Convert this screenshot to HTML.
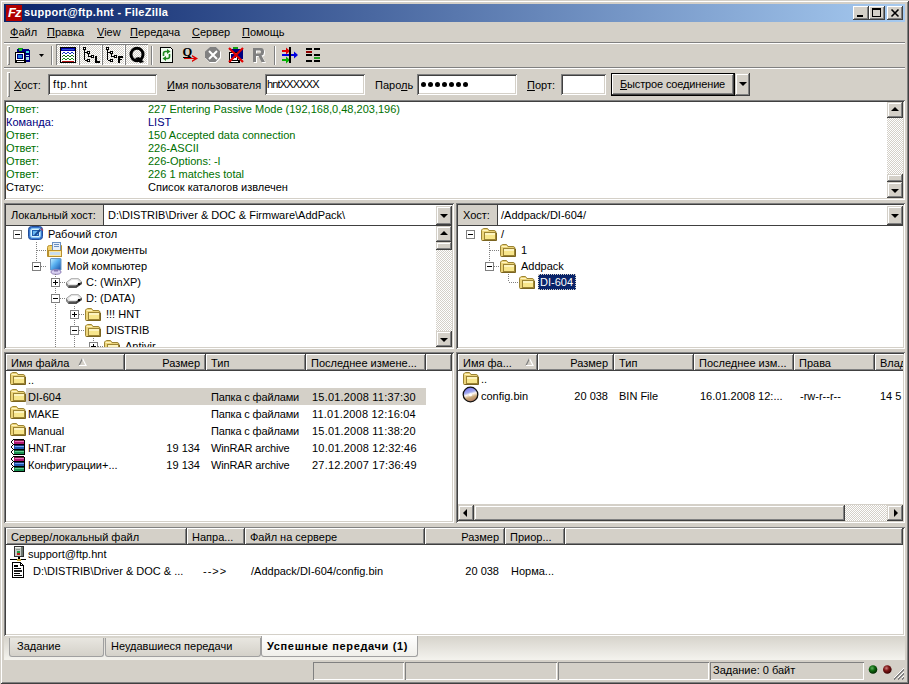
<!DOCTYPE html>
<html><head><meta charset="utf-8">
<style>
*{box-sizing:border-box}
html,body{margin:0;padding:0}
body{width:909px;height:684px;position:relative;overflow:hidden;background:#d4d0c8;font-family:"Liberation Sans",sans-serif;font-size:11px;color:#000}
.a{position:absolute}
.t{position:absolute;white-space:nowrap;line-height:13px;font-size:11px}
.w{background:#fff}
.sunk{box-shadow:inset 1px 1px 0 #808080,inset -1px -1px 0 #fff,inset 2px 2px 0 #404040,inset -2px -2px 0 #d4d0c8}
.rais{box-shadow:inset -1px -1px 0 #404040,inset 1px 1px 0 #d4d0c8,inset -2px -2px 0 #808080,inset 2px 2px 0 #fff;background:#d4d0c8}
.hdr{box-shadow:inset -1px -1px 0 #404040,inset 1px 1px 0 #fff,inset -2px -2px 0 #808080;background:#d4d0c8}
.pres{box-shadow:inset 1px 1px 0 #808080,inset -1px -1px 0 #fff;background-color:#ebe9e4;background-image:repeating-conic-gradient(#fff 0 25%,#d4d0c8 0 50%);background-size:2px 2px}
.track{background-image:repeating-conic-gradient(#fff 0 25%,#d4d0c8 0 50%);background-size:2px 2px}
.u{text-decoration:underline}
.hl{position:absolute}
</style></head><body>
<!-- window frame -->
<div class="a" style="left:0;top:0;width:909px;height:684px;box-shadow:inset 1px 1px 0 #d4d0c8,inset -1px -1px 0 #404040,inset 2px 2px 0 #fff,inset -2px -2px 0 #808080"></div>
<!-- title bar -->
<div class="a" style="left:4px;top:4px;width:901px;height:18px;background:linear-gradient(90deg,#0a246a,#a6caf0)"></div>
<div class="a" style="left:6px;top:5px;width:16px;height:16px;background:#b00000"></div>
<div class="t" style="left:8px;top:6px;color:#fff;font-weight:bold;font-style:italic;font-size:13px;letter-spacing:-1px">Fz</div>
<div class="t" style="left:24px;top:6px;color:#fff;font-weight:bold;letter-spacing:0.28px">support@ftp.hnt - FileZilla</div>
<div class="a" style="left:853px;top:6px;width:16px;height:14px;background:#d4d0c8;box-shadow:inset -1px -1px 0 #404040,inset 1px 1px 0 #fff,inset -2px -2px 0 #808080"></div><div class="a" style="left:869px;top:6px;width:16px;height:14px;background:#d4d0c8;box-shadow:inset -1px -1px 0 #404040,inset 1px 1px 0 #fff,inset -2px -2px 0 #808080"></div><div class="a" style="left:887px;top:6px;width:16px;height:14px;background:#d4d0c8;box-shadow:inset -1px -1px 0 #404040,inset 1px 1px 0 #fff,inset -2px -2px 0 #808080"></div><div class="a" style="left:857px;top:15px;width:6px;height:2px;background:#000"></div><div class="a" style="left:872px;top:8px;width:9px;height:9px;border:1px solid #000;border-top-width:2px"></div><svg class="a" style="left:887px;top:6px" width="16" height="14"><path d="M4.5 3.5 L11.5 10.5 M11.5 3.5 L4.5 10.5" stroke="#000" stroke-width="1.6"/></svg>
<!-- menu -->
<div class="t" style="left:10px;top:26px"><span class="u">Ф</span>айл</div>
<div class="t" style="left:47px;top:26px"><span class="u">П</span>равка</div>
<div class="t" style="left:97px;top:26px"><span class="u">V</span>iew</div>
<div class="t" style="left:130px;top:26px"><span class="u">П</span>ередача</div>
<div class="t" style="left:192px;top:26px"><span class="u">С</span>ервер</div>
<div class="t" style="left:242px;top:26px"><span class="u">П</span>омощь</div>
<div class="a" style="left:4px;top:42px;width:901px;height:1px;background:#808080"></div>
<div class="a" style="left:4px;top:43px;width:901px;height:1px;background:#fff"></div>
<!-- toolbar -->
<div class="a" style="left:7px;top:46px;width:3px;height:19px;box-shadow:inset 1px 1px 0 #fff,inset -1px -1px 0 #808080"></div>
<div class="a pres" style="left:56px;top:44px;width:23px;height:21px"></div><div class="a pres" style="left:79px;top:44px;width:23px;height:21px"></div><div class="a pres" style="left:102px;top:44px;width:23px;height:21px"></div><div class="a pres" style="left:125px;top:44px;width:23px;height:21px"></div>
<svg class="a" style="left:0;top:0" width="909" height="70" shape-rendering="crispEdges">
<!-- site manager icon -->
<g transform="translate(15,48)">
<rect x="3" y="0" width="5" height="2" fill="#10a010"/>
<rect x="2" y="1" width="12" height="3" fill="#000080"/>
<rect x="4" y="1" width="3" height="2" fill="#20c020"/>
<rect x="10" y="2" width="5" height="12" fill="#000080"/>
<rect x="11" y="3" width="3" height="2" fill="#40e0e0"/>
<rect x="11" y="7" width="3" height="1" fill="#c0f0f0"/>
<rect x="11" y="9" width="3" height="3" fill="#a0e0e0"/>
<rect x="0" y="4" width="10" height="9" fill="#000"/>
<rect x="1" y="5" width="8" height="7" fill="#fff"/>
<rect x="2" y="6" width="6" height="5" fill="#000080"/>
<rect x="3" y="7" width="4" height="3" fill="#2080e0"/>
<rect x="0" y="12" width="11" height="3" fill="#000"/>
<rect x="2" y="13" width="7" height="1" fill="#fff"/>
</g>
<polygon points="39,54 44,54 41.5,57" fill="#000" shape-rendering="auto"/>
<!-- separator -->
<rect x="51" y="46" width="1" height="19" fill="#808080"/><rect x="52" y="46" width="1" height="19" fill="#fff"/>
<!-- log icon -->
<g transform="translate(60,47)">
<rect x="0" y="0" width="16" height="16" fill="#000"/>
<rect x="1" y="1" width="14" height="3" fill="#0000a8"/>
<rect x="2" y="2" width="12" height="1" fill="#3050d0"/>
<rect x="1" y="4" width="14" height="11" fill="#fff"/>
<rect x="2" y="6" width="1" height="1" fill="#1030c0"/><rect x="3" y="5" width="1" height="1" fill="#1030c0"/><rect x="4" y="5" width="1" height="1" fill="#1030c0"/><rect x="5" y="6" width="1" height="1" fill="#1030c0"/><rect x="6" y="6" width="1" height="1" fill="#1030c0"/><rect x="7" y="5" width="1" height="1" fill="#1030c0"/><rect x="8" y="5" width="1" height="1" fill="#1030c0"/><rect x="9" y="6" width="1" height="1" fill="#1030c0"/><rect x="10" y="6" width="1" height="1" fill="#1030c0"/><rect x="11" y="5" width="1" height="1" fill="#1030c0"/><rect x="12" y="5" width="1" height="1" fill="#1030c0"/><rect x="13" y="6" width="1" height="1" fill="#1030c0"/><rect x="2" y="9" width="1" height="1" fill="#107010"/><rect x="3" y="8" width="1" height="1" fill="#107010"/><rect x="4" y="8" width="1" height="1" fill="#107010"/><rect x="5" y="9" width="1" height="1" fill="#107010"/><rect x="6" y="9" width="1" height="1" fill="#107010"/><rect x="7" y="8" width="1" height="1" fill="#107010"/><rect x="8" y="8" width="1" height="1" fill="#107010"/><rect x="9" y="9" width="1" height="1" fill="#107010"/><rect x="10" y="9" width="1" height="1" fill="#107010"/><rect x="11" y="8" width="1" height="1" fill="#107010"/><rect x="12" y="8" width="1" height="1" fill="#107010"/><rect x="13" y="9" width="1" height="1" fill="#107010"/><rect x="2" y="12" width="1" height="1" fill="#109010"/><rect x="3" y="11" width="1" height="1" fill="#109010"/><rect x="4" y="11" width="1" height="1" fill="#109010"/><rect x="5" y="12" width="1" height="1" fill="#109010"/><rect x="6" y="12" width="1" height="1" fill="#109010"/><rect x="7" y="11" width="1" height="1" fill="#109010"/><rect x="8" y="11" width="1" height="1" fill="#109010"/><rect x="9" y="12" width="1" height="1" fill="#109010"/><rect x="10" y="12" width="1" height="1" fill="#109010"/><rect x="11" y="11" width="1" height="1" fill="#109010"/><rect x="12" y="11" width="1" height="1" fill="#109010"/><rect x="13" y="12" width="1" height="1" fill="#109010"/><rect x="2" y="14" width="12" height="1" fill="#b01010"/>
</g>
<!-- tree L icon -->
<rect x="84" y="50" width="1" height="10" fill="#000"/><rect x="85" y="52" width="2" height="1" fill="#000"/><rect x="88" y="54" width="1" height="2" fill="#000"/><rect x="88" y="56" width="3" height="1" fill="#000"/><rect x="85" y="60" width="2" height="1" fill="#000"/><rect x="83" y="47" width="3" height="3" fill="#000"/><rect x="84" y="48" width="1" height="1" fill="#fff"/><rect x="87" y="51" width="3" height="3" fill="#000"/><rect x="88" y="52" width="1" height="1" fill="#fff"/><rect x="91" y="55" width="3" height="3" fill="#000"/><rect x="92" y="56" width="1" height="1" fill="#fff"/><rect x="87" y="59" width="3" height="3" fill="#000"/><rect x="88" y="60" width="1" height="1" fill="#fff"/><rect x="95" y="56" width="2" height="7" fill="#000"/><rect x="95" y="61" width="5" height="2" fill="#000"/>
<!-- tree F icon -->
<rect x="107" y="50" width="1" height="10" fill="#000"/><rect x="108" y="52" width="2" height="1" fill="#000"/><rect x="111" y="54" width="1" height="2" fill="#000"/><rect x="111" y="56" width="3" height="1" fill="#000"/><rect x="108" y="60" width="2" height="1" fill="#000"/><rect x="106" y="47" width="3" height="3" fill="#000"/><rect x="107" y="48" width="1" height="1" fill="#fff"/><rect x="110" y="51" width="3" height="3" fill="#000"/><rect x="111" y="52" width="1" height="1" fill="#fff"/><rect x="114" y="55" width="3" height="3" fill="#000"/><rect x="115" y="56" width="1" height="1" fill="#fff"/><rect x="110" y="59" width="3" height="3" fill="#000"/><rect x="111" y="60" width="1" height="1" fill="#fff"/><rect x="118" y="56" width="2" height="7" fill="#000"/><rect x="118" y="56" width="5" height="2" fill="#000"/><rect x="118" y="59" width="4" height="1" fill="#000"/>
<!-- Q icon -->
<g shape-rendering="auto">
<ellipse cx="137" cy="54.5" rx="6" ry="6.3" fill="none" stroke="#000" stroke-width="3"/>
<path d="M135 58 L139 57 L144 62 L140 63z" fill="#000"/>
</g>
<!-- separator -->
<rect x="151" y="46" width="1" height="19" fill="#808080"/><rect x="152" y="46" width="1" height="19" fill="#fff"/>
<!-- refresh icon -->
<g transform="translate(160,47)">
<path d="M0 0 H10 L13 3 V16 H0z" fill="#000"/>
<path d="M1 1 H9.5 L12 3.5 V15 H1z" fill="#f0faf0"/>
<path d="M10 1 L12 3 H10z" fill="#fff"/>
<g shape-rendering="auto" fill="none" stroke="#1e8a1e" stroke-width="1.6">
<path d="M3.5 9 V6.5 Q3.5 4.5 5.5 4.5 H7.5"/>
<path d="M9.5 7 V9.5 Q9.5 11.5 7.5 11.5 H5.5"/>
</g>
<path d="M7 2 L10.5 4.5 L7 7z" fill="#1e8a1e" shape-rendering="auto"/>
<path d="M6 9 L2.5 11.5 L6 14z" fill="#1e8a1e" shape-rendering="auto"/>
</g>
<!-- Q arrow -->
<text x="182.5" y="56" font-family="Liberation Serif" font-weight="bold" font-size="12.5" fill="#000" shape-rendering="auto">Q</text>
<rect x="183" y="57" width="8" height="1" fill="#000"/>
<rect x="184" y="58" width="11" height="1" fill="#e00000"/>
<path d="M192 55 L198 58.5 L192 62 L192 60.5 L195 58.5 L192 56.5z" fill="#e00000" shape-rendering="auto"/>
<!-- cancel octagon -->
<g shape-rendering="auto">
<path d="M210 47 H216 L221 52 V58 L216 63 H210 L205 58 V52z" fill="#fff"/>
<path d="M210 47 H216 L220 51 V57 L215.5 62 H209.5 L205 57.5 V51.5z" fill="#808080"/>
<path d="M209 51 L217 59 M217 51 L209 59" stroke="#fff" stroke-width="2"/>
</g>
<!-- disconnect -->
<g transform="translate(228,47)">
<rect x="5" y="0" width="5" height="2" fill="#10a010"/>
<rect x="3" y="2" width="12" height="10" fill="#000080"/>
<rect x="1" y="5" width="9" height="9" fill="#000"/>
<rect x="2" y="6" width="7" height="7" fill="#fff"/>
<rect x="3" y="7" width="5" height="4" fill="#000080"/>
<rect x="1" y="13" width="11" height="3" fill="#000"/>
<rect x="3" y="14" width="7" height="1" fill="#fff"/>
<path d="M1 1 L15 15 M15 1 L1 15" stroke="#e00000" stroke-width="2.2" shape-rendering="auto"/>
</g>
<!-- R disabled -->
<path transform="translate(1,1)" d="M253 48 H261 Q264 48 264 51.5 V52.5 Q264 55 261.5 55.5 L265 62 H261.5 L258.5 56 H256 V62 H253z M256 50.5 V53.5 H260 Q261 53.5 261 52 Q261 50.5 260 50.5z" fill="#fff" fill-rule="evenodd" shape-rendering="auto"/>
<path d="M253 48 H261 Q264 48 264 51.5 V52.5 Q264 55 261.5 55.5 L265 62 H261.5 L258.5 56 H256 V62 H253z M256 50.5 V53.5 H260 Q261 53.5 261 52 Q261 50.5 260 50.5z" fill="#808080" fill-rule="evenodd" shape-rendering="auto"/>
<!-- separator -->
<rect x="274" y="46" width="1" height="19" fill="#808080"/><rect x="275" y="46" width="1" height="19" fill="#fff"/>
<!-- sync -->
<g shape-rendering="auto">
<rect x="282" y="50" width="6" height="2" fill="#e00000"/><path d="M286 47.5 L290 51 L286 54.5z" fill="#e00000"/>
<rect x="282" y="59" width="6" height="2" fill="#00b000"/><path d="M286 56.5 L290 60 L286 63.5z" fill="#00b000"/>
<rect x="282" y="54" width="13" height="2" fill="#0000e0"/><path d="M294 51.5 L298 55 L294 58.5z" fill="#0000e0"/>
</g>
<rect x="289" y="47" width="2" height="16" fill="#000"/>
<!-- compare -->
<rect x="306" y="48" width="6" height="2" fill="#000"/><rect x="314" y="48" width="6" height="2" fill="#000"/>
<rect x="306" y="51" width="6" height="2" fill="#900000"/>
<rect x="306" y="54" width="6" height="2" fill="#000"/><rect x="314" y="54" width="6" height="2" fill="#000"/>
<rect x="314" y="57" width="6" height="2" fill="#20a020"/>
<rect x="306" y="60" width="6" height="2" fill="#000"/><rect x="314" y="60" width="6" height="2" fill="#000"/>
</svg>

<div class="a" style="left:4px;top:67px;width:901px;height:1px;background:#808080"></div>
<div class="a" style="left:4px;top:68px;width:901px;height:1px;background:#fff"></div>
<!-- quickconnect -->
<div class="a" style="left:7px;top:72px;width:3px;height:25px;box-shadow:inset 1px 1px 0 #fff,inset -1px -1px 0 #808080"></div>
<div class="t" style="left:14px;top:79px"><span class="u">Х</span>ост:</div>
<div class="a w sunk" style="left:48px;top:74px;width:109px;height:21px"></div>
<div class="t" style="left:53px;top:78px;letter-spacing:0.6px">ftp.hnt</div>
<div class="t" style="left:167px;top:79px"><span class="u">И</span>мя пользователя</div>
<div class="a w sunk" style="left:265px;top:74px;width:100px;height:21px"></div>
<div class="t" style="left:267px;top:78px;letter-spacing:-0.85px">hntXXXXXX</div>
<div class="t" style="left:375px;top:79px">Паро<span class="u">л</span>ь</div>
<div class="a w sunk" style="left:417px;top:74px;width:100px;height:21px"></div>
<div class="a" style="left:421px;top:82px;width:5px;height:5px;border-radius:50%;background:#000"></div><div class="a" style="left:428px;top:82px;width:5px;height:5px;border-radius:50%;background:#000"></div><div class="a" style="left:435px;top:82px;width:5px;height:5px;border-radius:50%;background:#000"></div><div class="a" style="left:442px;top:82px;width:5px;height:5px;border-radius:50%;background:#000"></div><div class="a" style="left:449px;top:82px;width:5px;height:5px;border-radius:50%;background:#000"></div><div class="a" style="left:456px;top:82px;width:5px;height:5px;border-radius:50%;background:#000"></div><div class="a" style="left:463px;top:82px;width:5px;height:5px;border-radius:50%;background:#000"></div>
<div class="t" style="left:527px;top:79px"><span class="u">П</span>орт:</div>
<div class="a w sunk" style="left:561px;top:74px;width:45px;height:21px"></div>
<div class="a" style="left:611px;top:73px;width:124px;height:23px;border:1px solid #000;background:#d4d0c8;box-shadow:inset -1px -1px 0 #404040,inset 1px 1px 0 #fff,inset -2px -2px 0 #808080"></div>
<div class="t" style="left:620px;top:78px;letter-spacing:-0.15px"><span class="u">Б</span>ыстрое соединение</div>
<div class="a rais" style="left:735px;top:73px;width:15px;height:23px"></div>
<div class="a" style="left:739px;top:82px;width:0;height:0;border-left:4px solid transparent;border-right:4px solid transparent;border-top:4px solid #000"></div>
<!-- log -->
<div class="a w sunk" style="left:4px;top:100px;width:901px;height:100px"></div>
<div class="t" style="left:6px;top:103px;color:#007000">Ответ:</div><div class="t" style="left:148px;top:103px;color:#007000">227 Entering Passive Mode (192,168,0,48,203,196)</div><div class="t" style="left:6px;top:116px;color:#000080">Команда:</div><div class="t" style="left:148px;top:116px;color:#000080">LIST</div><div class="t" style="left:6px;top:129px;color:#007000">Ответ:</div><div class="t" style="left:148px;top:129px;color:#007000">150 Accepted data connection</div><div class="t" style="left:6px;top:142px;color:#007000">Ответ:</div><div class="t" style="left:148px;top:142px;color:#007000">226-ASCII</div><div class="t" style="left:6px;top:155px;color:#007000">Ответ:</div><div class="t" style="left:148px;top:155px;color:#007000">226-Options: -l</div><div class="t" style="left:6px;top:168px;color:#007000">Ответ:</div><div class="t" style="left:148px;top:168px;color:#007000">226 1 matches total</div><div class="t" style="left:6px;top:181px;color:#000">Статус:</div><div class="t" style="left:148px;top:181px;color:#000">Список каталогов извлечен</div><div class="a track" style="left:887px;top:102px;width:16px;height:96px"></div><div class="a rais" style="left:887px;top:102px;width:16px;height:16px"></div><div class="a" style="left:891px;top:107px;width:0;height:0;border-left:4px solid transparent;border-right:4px solid transparent;border-bottom:4px solid #000"></div><div class="a rais" style="left:887px;top:174px;width:16px;height:8px"></div><div class="a rais" style="left:887px;top:182px;width:16px;height:16px"></div><div class="a" style="left:891px;top:189px;width:0;height:0;border-left:4px solid transparent;border-right:4px solid transparent;border-top:4px solid #000"></div>
<!-- local site panel -->
<div class="a w sunk" style="left:4px;top:203px;width:450px;height:146px"></div>
<div class="a" style="left:6px;top:205px;width:446px;height:20px;background:#d4d0c8"></div><div class="a" style="left:6px;top:225px;width:446px;height:1px;background:#404040"></div><div class="t" style="left:11px;top:209px;">Локальный хост:</div><div class="a" style="left:103px;top:205px;width:1px;height:20px;background:#404040"></div><div class="a w" style="left:104px;top:205px;width:348px;height:20px"></div><div class="t" style="left:108px;top:209px;">D:\DISTRIB\Driver &amp; DOC &amp; Firmware\AddPack\</div><div class="a rais" style="left:436px;top:206px;width:16px;height:19px"></div><div class="a" style="left:440px;top:214px;width:0;height:0;border-left:4px solid transparent;border-right:4px solid transparent;border-top:4px solid #000"></div><div class="a track" style="left:436px;top:226px;width:16px;height:121px"></div><div class="a rais" style="left:436px;top:226px;width:16px;height:16px"></div><div class="a" style="left:440px;top:231px;width:0;height:0;border-left:4px solid transparent;border-right:4px solid transparent;border-bottom:4px solid #000"></div><div class="a rais" style="left:436px;top:242px;width:16px;height:8px"></div><div class="a rais" style="left:436px;top:331px;width:16px;height:16px"></div><div class="a" style="left:440px;top:338px;width:0;height:0;border-left:4px solid transparent;border-right:4px solid transparent;border-top:4px solid #000"></div><div class="a" style="left:13px;top:230px;width:9px;height:9px;border:1px solid #808080;background:#fff"></div><div class="a" style="left:15px;top:234px;width:5px;height:1px;background:#000"></div><svg class="a" style="left:28px;top:225px" width="16" height="16" ><rect x="0.5" y="1.5" width="14" height="13" rx="3" fill="#3a78d0" stroke="#204c98"/><rect x="2.5" y="3.5" width="10" height="9" rx="2" fill="#d8f2ff" stroke="#8cc8f0"/><rect x="4.5" y="5.5" width="6" height="5" fill="#6ab8f0" stroke="#2060b0"/><path d="M6 10 L11.5 4 L13 5.5 L7.5 11z" fill="#184890"/><path d="M13 3.5 L15 5.5" stroke="#a04060" stroke-width="1.2"/></svg><div class="t" style="left:48px;top:228px;">Рабочий стол</div><div class="a" style="left:36px;top:242px;width:1px;height:24px;background-image:linear-gradient(#808080 50%,transparent 50%);background-size:1px 2px"></div><div class="a" style="left:37px;top:250px;width:9px;height:1px;background-image:linear-gradient(90deg,#808080 50%,transparent 50%);background-size:2px 1px"></div><svg class="a" style="left:47px;top:242px" width="16" height="16" ><path d="M0.5 5.5 Q0.5 3.5 2.5 3.5 H14.5 V14.5 H0.5z" fill="#f2d06a" stroke="#b8902e"/><rect x="5.5" y="0.5" width="8" height="8" fill="#e8f0fb" stroke="#6b8fc0"/><rect x="7" y="2" width="5" height="1" fill="#6b8fc0"/><rect x="7" y="4" width="5" height="1" fill="#6b8fc0"/><rect x="1.5" y="8.5" width="13" height="6" fill="#fbe6a0" stroke="#b8902e"/><rect x="3" y="10" width="10" height="3" fill="#c8ddf0"/></svg><div class="t" style="left:67px;top:244px;">Мои документы</div><div class="a" style="left:32px;top:262px;width:9px;height:9px;border:1px solid #808080;background:#fff"></div><div class="a" style="left:34px;top:266px;width:5px;height:1px;background:#000"></div><div class="a" style="left:41px;top:266px;width:6px;height:1px;background-image:linear-gradient(90deg,#808080 50%,transparent 50%);background-size:2px 1px"></div><svg class="a" style="left:46px;top:258px" width="16" height="17" ><defs><linearGradient id="mcg" x1="0" y1="0" x2="1" y2="1"><stop offset="0" stop-color="#c8f0ff"/><stop offset="0.45" stop-color="#58b0f0"/><stop offset="1" stop-color="#1850a8"/></linearGradient></defs><path d="M4.5 1 Q4.5 0.5 5 0.5 H14.5 Q15 0.5 15 1 V12 H4.5z" fill="url(#mcg)" stroke="#6898c8"/><ellipse cx="10" cy="14" rx="5" ry="2.3" fill="#d8d0f0" stroke="#9080b8"/><rect x="8" y="12" width="4" height="1.5" fill="#8878b0"/></svg><div class="t" style="left:67px;top:260px;">Мой компьютер</div><div class="a" style="left:55px;top:274px;width:1px;height:73px;background-image:linear-gradient(#808080 50%,transparent 50%);background-size:1px 2px"></div><div class="a" style="left:51px;top:278px;width:9px;height:9px;border:1px solid #808080;background:#fff"></div><div class="a" style="left:53px;top:282px;width:5px;height:1px;background:#000"></div><div class="a" style="left:55px;top:280px;width:1px;height:5px;background:#000"></div><div class="a" style="left:60px;top:282px;width:5px;height:1px;background-image:linear-gradient(90deg,#808080 50%,transparent 50%);background-size:2px 1px"></div><svg class="a" style="left:65px;top:278px" width="18" height="11" ><path d="M1 4.5 L6 0.5 H13.5 L17 4 V6 L11 10 H3.5 L1 7z" fill="#707070"/><path d="M1.5 4.5 L6.2 1 H13.3 L16.5 4 L11 7.5 H3.5z" fill="#e4e4e4"/><path d="M4 4 L7 2 H12 L14 4 L11 6 H5z" fill="#ffffff"/><path d="M3.5 7.5 H11 V10 H3.5z" fill="#505050"/><path d="M11 7.5 L16.5 4 V6 L11 10z" fill="#404040"/><rect x="13" y="5" width="2" height="2" fill="#000"/><path d="M1.5 5 L3.5 7.5 V9.5 L1.5 7z" fill="#909090"/></svg><div class="t" style="left:86px;top:276px;">C: (WinXP)</div><div class="a" style="left:51px;top:294px;width:9px;height:9px;border:1px solid #808080;background:#fff"></div><div class="a" style="left:53px;top:298px;width:5px;height:1px;background:#000"></div><div class="a" style="left:60px;top:298px;width:5px;height:1px;background-image:linear-gradient(90deg,#808080 50%,transparent 50%);background-size:2px 1px"></div><svg class="a" style="left:65px;top:294px" width="18" height="11" ><path d="M1 4.5 L6 0.5 H13.5 L17 4 V6 L11 10 H3.5 L1 7z" fill="#707070"/><path d="M1.5 4.5 L6.2 1 H13.3 L16.5 4 L11 7.5 H3.5z" fill="#e4e4e4"/><path d="M4 4 L7 2 H12 L14 4 L11 6 H5z" fill="#ffffff"/><path d="M3.5 7.5 H11 V10 H3.5z" fill="#505050"/><path d="M11 7.5 L16.5 4 V6 L11 10z" fill="#404040"/><rect x="13" y="5" width="2" height="2" fill="#000"/><path d="M1.5 5 L3.5 7.5 V9.5 L1.5 7z" fill="#909090"/></svg><div class="t" style="left:86px;top:292px;">D: (DATA)</div><div class="a" style="left:74px;top:306px;width:1px;height:41px;background-image:linear-gradient(#808080 50%,transparent 50%);background-size:1px 2px"></div><div class="a" style="left:70px;top:310px;width:9px;height:9px;border:1px solid #808080;background:#fff"></div><div class="a" style="left:72px;top:314px;width:5px;height:1px;background:#000"></div><div class="a" style="left:74px;top:312px;width:1px;height:5px;background:#000"></div><div class="a" style="left:79px;top:314px;width:5px;height:1px;background-image:linear-gradient(90deg,#808080 50%,transparent 50%);background-size:2px 1px"></div><svg class="a" style="left:85px;top:308px" width="17" height="14"><path d="M0.5 3 Q0.5 1.5 1.5 1 L2.5 0.5 H6.5 L8 2.5 H13 Q14.5 2.5 15 4 V12.5 H1.5 Q0.5 12.5 0.5 11.5z" fill="#ecd47a" stroke="#9c8434"/><path d="M1.5 2.5 H7" stroke="#fff4c0"/><rect x="3.5" y="4.5" width="11" height="7" fill="#f8e68c" stroke="#9c8434"/><rect x="4" y="5" width="10" height="2" fill="#fdf4c0"/><path d="M1.5 12.5 H15.5 V5" fill="none" stroke="#7a6420" stroke-width="1"/></svg><div class="t" style="left:106px;top:308px;">!!! HNT</div><div class="a" style="left:70px;top:326px;width:9px;height:9px;border:1px solid #808080;background:#fff"></div><div class="a" style="left:72px;top:330px;width:5px;height:1px;background:#000"></div><div class="a" style="left:79px;top:330px;width:5px;height:1px;background-image:linear-gradient(90deg,#808080 50%,transparent 50%);background-size:2px 1px"></div><svg class="a" style="left:85px;top:324px" width="17" height="14"><path d="M0.5 3 Q0.5 1.5 1.5 1 L2.5 0.5 H6.5 L8 2.5 H13 Q14.5 2.5 15 4 V12.5 H1.5 Q0.5 12.5 0.5 11.5z" fill="#ecd47a" stroke="#9c8434"/><path d="M1.5 2.5 H7" stroke="#fff4c0"/><rect x="3.5" y="4.5" width="11" height="7" fill="#f8e68c" stroke="#9c8434"/><rect x="4" y="5" width="10" height="2" fill="#fdf4c0"/><path d="M1.5 12.5 H15.5 V5" fill="none" stroke="#7a6420" stroke-width="1"/></svg><div class="t" style="left:106px;top:324px;">DISTRIB</div><div class="a" style="left:93px;top:338px;width:1px;height:9px;background-image:linear-gradient(#808080 50%,transparent 50%);background-size:1px 2px"></div><div class="a" style="left:6px;top:226px;width:429px;height:121px;overflow:hidden"><div class="a" style="margin-left:-6px;left:89px;margin-top:-226px;top:342px;width:9px;height:9px;border:1px solid #808080;background:#fff"></div><div class="a" style="margin-left:-6px;left:91px;margin-top:-226px;top:346px;width:5px;height:1px;background:#000"></div><div class="a" style="margin-left:-6px;left:93px;margin-top:-226px;top:344px;width:1px;height:5px;background:#000"></div><div class="a" style="margin-left:-6px;left:98px;margin-top:-226px;top:346px;width:5px;height:1px;background-image:linear-gradient(90deg,#808080 50%,transparent 50%);background-size:2px 1px"></div><svg class="a" style="margin-left:-6px;left:104px;margin-top:-226px;top:340px" width="17" height="14"><path d="M0.5 3 Q0.5 1.5 1.5 1 L2.5 0.5 H6.5 L8 2.5 H13 Q14.5 2.5 15 4 V12.5 H1.5 Q0.5 12.5 0.5 11.5z" fill="#ecd47a" stroke="#9c8434"/><path d="M1.5 2.5 H7" stroke="#fff4c0"/><rect x="3.5" y="4.5" width="11" height="7" fill="#f8e68c" stroke="#9c8434"/><rect x="4" y="5" width="10" height="2" fill="#fdf4c0"/><path d="M1.5 12.5 H15.5 V5" fill="none" stroke="#7a6420" stroke-width="1"/></svg><div class="t" style="margin-left:-6px;left:125px;margin-top:-226px;top:340px;">Antivir</div></div>
<!-- remote site panel -->
<div class="a w sunk" style="left:456px;top:203px;width:449px;height:146px"></div>
<div class="a" style="left:458px;top:205px;width:445px;height:20px;background:#d4d0c8"></div><div class="a" style="left:458px;top:225px;width:445px;height:1px;background:#404040"></div><div class="t" style="left:463px;top:209px;">Хост:</div><div class="a" style="left:497px;top:205px;width:1px;height:20px;background:#404040"></div><div class="a w" style="left:498px;top:205px;width:405px;height:20px"></div><div class="t" style="left:501px;top:209px;">/Addpack/DI-604/</div><div class="a rais" style="left:887px;top:206px;width:16px;height:19px"></div><div class="a" style="left:891px;top:214px;width:0;height:0;border-left:4px solid transparent;border-right:4px solid transparent;border-top:4px solid #000"></div><div class="a" style="left:466px;top:230px;width:9px;height:9px;border:1px solid #808080;background:#fff"></div><div class="a" style="left:468px;top:234px;width:5px;height:1px;background:#000"></div><svg class="a" style="left:481px;top:228px" width="17" height="14"><path d="M0.5 3 Q0.5 1.5 1.5 1 L2.5 0.5 H6.5 L8 2.5 H13 Q14.5 2.5 15 4 V12.5 H1.5 Q0.5 12.5 0.5 11.5z" fill="#ecd47a" stroke="#9c8434"/><path d="M1.5 2.5 H7" stroke="#fff4c0"/><rect x="3.5" y="4.5" width="11" height="7" fill="#f8e68c" stroke="#9c8434"/><rect x="4" y="5" width="10" height="2" fill="#fdf4c0"/><path d="M1.5 12.5 H15.5 V5" fill="none" stroke="#7a6420" stroke-width="1"/></svg><div class="t" style="left:501px;top:228px;">/</div><div class="a" style="left:489px;top:242px;width:1px;height:24px;background-image:linear-gradient(#808080 50%,transparent 50%);background-size:1px 2px"></div><div class="a" style="left:490px;top:250px;width:9px;height:1px;background-image:linear-gradient(90deg,#808080 50%,transparent 50%);background-size:2px 1px"></div><svg class="a" style="left:500px;top:244px" width="17" height="14"><path d="M0.5 3 Q0.5 1.5 1.5 1 L2.5 0.5 H6.5 L8 2.5 H13 Q14.5 2.5 15 4 V12.5 H1.5 Q0.5 12.5 0.5 11.5z" fill="#ecd47a" stroke="#9c8434"/><path d="M1.5 2.5 H7" stroke="#fff4c0"/><rect x="3.5" y="4.5" width="11" height="7" fill="#f8e68c" stroke="#9c8434"/><rect x="4" y="5" width="10" height="2" fill="#fdf4c0"/><path d="M1.5 12.5 H15.5 V5" fill="none" stroke="#7a6420" stroke-width="1"/></svg><div class="t" style="left:521px;top:244px;">1</div><div class="a" style="left:485px;top:262px;width:9px;height:9px;border:1px solid #808080;background:#fff"></div><div class="a" style="left:487px;top:266px;width:5px;height:1px;background:#000"></div><div class="a" style="left:494px;top:266px;width:5px;height:1px;background-image:linear-gradient(90deg,#808080 50%,transparent 50%);background-size:2px 1px"></div><svg class="a" style="left:500px;top:260px" width="17" height="14"><path d="M0.5 3 Q0.5 1.5 1.5 1 L2.5 0.5 H6.5 L8 2.5 H13 Q14.5 2.5 15 4 V12.5 H1.5 Q0.5 12.5 0.5 11.5z" fill="#ecd47a" stroke="#9c8434"/><path d="M1.5 2.5 H7" stroke="#fff4c0"/><rect x="3.5" y="4.5" width="11" height="7" fill="#f8e68c" stroke="#9c8434"/><rect x="4" y="5" width="10" height="2" fill="#fdf4c0"/><path d="M1.5 12.5 H15.5 V5" fill="none" stroke="#7a6420" stroke-width="1"/></svg><div class="t" style="left:521px;top:260px;">Addpack</div><div class="a" style="left:508px;top:274px;width:1px;height:8px;background-image:linear-gradient(#808080 50%,transparent 50%);background-size:1px 2px"></div><div class="a" style="left:509px;top:282px;width:9px;height:1px;background-image:linear-gradient(90deg,#808080 50%,transparent 50%);background-size:2px 1px"></div><svg class="a" style="left:519px;top:276px" width="17" height="14"><path d="M0.5 3 Q0.5 1.5 1.5 1 L2.5 0.5 H6.5 L8 2.5 H13 Q14.5 2.5 15 4 V12.5 H1.5 Q0.5 12.5 0.5 11.5z" fill="#ecd47a" stroke="#9c8434"/><path d="M1.5 2.5 H7" stroke="#fff4c0"/><rect x="3.5" y="4.5" width="11" height="7" fill="#f8e68c" stroke="#9c8434"/><rect x="4" y="5" width="10" height="2" fill="#fdf4c0"/><path d="M1.5 12.5 H15.5 V5" fill="none" stroke="#7a6420" stroke-width="1"/></svg><div class="a" style="left:538px;top:274px;width:38px;height:16px;background:#0a246a;outline:1px dotted #d4d0c8;outline-offset:-1px"></div><div class="t" style="left:540px;top:276px;color:#fff">DI-604</div>
<!-- local list -->
<div class="a w sunk" style="left:4px;top:352px;width:450px;height:171px"></div>
<div class="a hdr" style="left:6px;top:354px;width:119px;height:17px"></div><div class="t" style="left:11px;top:357px;">Имя файла</div><div class="a hdr" style="left:125px;top:354px;width:81px;height:17px"></div><div class="t" style="left:125px;top:357px;width:75px;text-align:right">Размер</div><div class="a hdr" style="left:206px;top:354px;width:100px;height:17px"></div><div class="t" style="left:211px;top:357px;">Тип</div><div class="a hdr" style="left:306px;top:354px;width:120px;height:17px"></div><div class="t" style="left:311px;top:357px;">Последнее измене...</div><div class="a hdr" style="left:426px;top:354px;width:26px;height:17px"></div><svg class="a" style="left:10px;top:372px" width="17" height="14"><path d="M0.5 3 Q0.5 1.5 1.5 1 L2.5 0.5 H6.5 L8 2.5 H13 Q14.5 2.5 15 4 V12.5 H1.5 Q0.5 12.5 0.5 11.5z" fill="#ecd47a" stroke="#9c8434"/><path d="M1.5 2.5 H7" stroke="#fff4c0"/><rect x="3.5" y="4.5" width="11" height="7" fill="#f8e68c" stroke="#9c8434"/><rect x="4" y="5" width="10" height="2" fill="#fdf4c0"/><path d="M1.5 12.5 H15.5 V5" fill="none" stroke="#7a6420" stroke-width="1"/></svg><div class="t" style="left:28px;top:374px;">..</div><div class="t" style="left:211px;top:374px;letter-spacing:-0.15px"></div><div class="t" style="left:312px;top:374px;letter-spacing:0.2px"></div><div class="a" style="left:26px;top:388px;width:400px;height:17px;background:#d4d0c8"></div><svg class="a" style="left:10px;top:389px" width="17" height="14"><path d="M0.5 3 Q0.5 1.5 1.5 1 L2.5 0.5 H6.5 L8 2.5 H13 Q14.5 2.5 15 4 V12.5 H1.5 Q0.5 12.5 0.5 11.5z" fill="#ecd47a" stroke="#9c8434"/><path d="M1.5 2.5 H7" stroke="#fff4c0"/><rect x="3.5" y="4.5" width="11" height="7" fill="#f8e68c" stroke="#9c8434"/><rect x="4" y="5" width="10" height="2" fill="#fdf4c0"/><path d="M1.5 12.5 H15.5 V5" fill="none" stroke="#7a6420" stroke-width="1"/></svg><div class="t" style="left:28px;top:391px;">DI-604</div><div class="t" style="left:211px;top:391px;letter-spacing:-0.15px">Папка с файлами</div><div class="t" style="left:312px;top:391px;letter-spacing:0.2px">15.01.2008 11:37:30</div><svg class="a" style="left:10px;top:406px" width="17" height="14"><path d="M0.5 3 Q0.5 1.5 1.5 1 L2.5 0.5 H6.5 L8 2.5 H13 Q14.5 2.5 15 4 V12.5 H1.5 Q0.5 12.5 0.5 11.5z" fill="#ecd47a" stroke="#9c8434"/><path d="M1.5 2.5 H7" stroke="#fff4c0"/><rect x="3.5" y="4.5" width="11" height="7" fill="#f8e68c" stroke="#9c8434"/><rect x="4" y="5" width="10" height="2" fill="#fdf4c0"/><path d="M1.5 12.5 H15.5 V5" fill="none" stroke="#7a6420" stroke-width="1"/></svg><div class="t" style="left:28px;top:408px;">MAKE</div><div class="t" style="left:211px;top:408px;letter-spacing:-0.15px">Папка с файлами</div><div class="t" style="left:312px;top:408px;letter-spacing:0.2px">11.01.2008 12:16:04</div><svg class="a" style="left:10px;top:423px" width="17" height="14"><path d="M0.5 3 Q0.5 1.5 1.5 1 L2.5 0.5 H6.5 L8 2.5 H13 Q14.5 2.5 15 4 V12.5 H1.5 Q0.5 12.5 0.5 11.5z" fill="#ecd47a" stroke="#9c8434"/><path d="M1.5 2.5 H7" stroke="#fff4c0"/><rect x="3.5" y="4.5" width="11" height="7" fill="#f8e68c" stroke="#9c8434"/><rect x="4" y="5" width="10" height="2" fill="#fdf4c0"/><path d="M1.5 12.5 H15.5 V5" fill="none" stroke="#7a6420" stroke-width="1"/></svg><div class="t" style="left:28px;top:425px;">Manual</div><div class="t" style="left:211px;top:425px;letter-spacing:-0.15px">Папка с файлами</div><div class="t" style="left:312px;top:425px;letter-spacing:0.2px">15.01.2008 11:38:20</div><div class="t" style="left:28px;top:442px;">HNT.rar</div><div class="t" style="left:125px;top:442px;width:75px;text-align:right">19 134</div><div class="t" style="left:211px;top:442px;letter-spacing:-0.15px">WinRAR archive</div><div class="t" style="left:312px;top:442px;letter-spacing:0.2px">10.01.2008 12:32:46</div><div class="t" style="left:28px;top:459px;">Конфигурации+...</div><div class="t" style="left:125px;top:459px;width:75px;text-align:right">19 134</div><div class="t" style="left:211px;top:459px;letter-spacing:-0.15px">WinRAR archive</div><div class="t" style="left:312px;top:459px;letter-spacing:0.2px">27.12.2007 17:36:49</div><svg class="a" style="left:9px;top:439px" width="17" height="17" shape-rendering="crispEdges"><path d="M1 3 L4 0 H15 L16 2 V5 L15 6 H5 L1 3z" fill="#000"/><rect x="5" y="2" width="10" height="3" fill="#b01870"/><rect x="6" y="2" width="9" height="1" fill="#f070c0"/><path d="M2 3 L4.5 1 V5z" fill="#fff"/><path d="M4 1 H14 L15 2 H5z" fill="#702040"/><path d="M1 8 L4 5 H15 L16 7 V10 L15 11 H5 L1 8z" fill="#000"/><rect x="5" y="7" width="10" height="3" fill="#2058b0"/><rect x="6" y="7" width="9" height="1" fill="#70a8f0"/><path d="M2 8 L4.5 6 V10z" fill="#fff"/><path d="M4 6 H14 L15 7 H5z" fill="#203070"/><path d="M1 13 L4 10 H15 L16 12 V15 L15 16 H5 L1 13z" fill="#000"/><rect x="5" y="12" width="10" height="3" fill="#189050"/><rect x="6" y="12" width="9" height="1" fill="#60d090"/><path d="M2 13 L4.5 11 V15z" fill="#fff"/><path d="M4 11 H14 L15 12 H5z" fill="#105030"/></svg><svg class="a" style="left:9px;top:456px" width="17" height="17" shape-rendering="crispEdges"><path d="M1 3 L4 0 H15 L16 2 V5 L15 6 H5 L1 3z" fill="#000"/><rect x="5" y="2" width="10" height="3" fill="#b01870"/><rect x="6" y="2" width="9" height="1" fill="#f070c0"/><path d="M2 3 L4.5 1 V5z" fill="#fff"/><path d="M4 1 H14 L15 2 H5z" fill="#702040"/><path d="M1 8 L4 5 H15 L16 7 V10 L15 11 H5 L1 8z" fill="#000"/><rect x="5" y="7" width="10" height="3" fill="#2058b0"/><rect x="6" y="7" width="9" height="1" fill="#70a8f0"/><path d="M2 8 L4.5 6 V10z" fill="#fff"/><path d="M4 6 H14 L15 7 H5z" fill="#203070"/><path d="M1 13 L4 10 H15 L16 12 V15 L15 16 H5 L1 13z" fill="#000"/><rect x="5" y="12" width="10" height="3" fill="#189050"/><rect x="6" y="12" width="9" height="1" fill="#60d090"/><path d="M2 13 L4.5 11 V15z" fill="#fff"/><path d="M4 11 H14 L15 12 H5z" fill="#105030"/></svg><svg class="a" style="left:78px;top:357px" width="10" height="10"><path d="M1 8.5 L4.5 1.5" stroke="#808080" stroke-width="1.2"/><path d="M4.5 1.5 L8 8.5 H1" fill="none" stroke="#fff" stroke-width="1.2"/></svg>
<!-- remote list -->
<div class="a w sunk" style="left:456px;top:352px;width:449px;height:171px"></div>
<div class="a" style="left:0;top:0;width:909px;height:684px;clip-path:inset(354px 6px 163px 458px)"><div class="a hdr" style="left:458px;top:354px;width:80px;height:17px"></div><div class="t" style="left:463px;top:357px;">Имя фа...</div><div class="a hdr" style="left:538px;top:354px;width:76px;height:17px"></div><div class="t" style="left:538px;top:357px;width:70px;text-align:right">Размер</div><div class="a hdr" style="left:614px;top:354px;width:80px;height:17px"></div><div class="t" style="left:619px;top:357px;">Тип</div><div class="a hdr" style="left:694px;top:354px;width:100px;height:17px"></div><div class="t" style="left:699px;top:357px;">Последнее изм...</div><div class="a hdr" style="left:794px;top:354px;width:81px;height:17px"></div><div class="t" style="left:799px;top:357px;">Права</div><div class="a hdr" style="left:875px;top:354px;width:60px;height:17px"></div><div class="t" style="left:880px;top:357px;">Влад</div><svg class="a" style="left:463px;top:372px" width="17" height="14"><path d="M0.5 3 Q0.5 1.5 1.5 1 L2.5 0.5 H6.5 L8 2.5 H13 Q14.5 2.5 15 4 V12.5 H1.5 Q0.5 12.5 0.5 11.5z" fill="#ecd47a" stroke="#9c8434"/><path d="M1.5 2.5 H7" stroke="#fff4c0"/><rect x="3.5" y="4.5" width="11" height="7" fill="#f8e68c" stroke="#9c8434"/><rect x="4" y="5" width="10" height="2" fill="#fdf4c0"/><path d="M1.5 12.5 H15.5 V5" fill="none" stroke="#7a6420" stroke-width="1"/></svg><div class="t" style="left:481px;top:373px;">..</div><div class="t" style="left:481px;top:390px;">config.bin</div><div class="t" style="left:537px;top:390px;width:71px;text-align:right">20 038</div><div class="t" style="left:619px;top:390px;">BIN File</div><div class="t" style="left:700px;top:390px;">16.01.2008 12:...</div><div class="t" style="left:800px;top:390px;">-rw-r--r--</div><div class="t" style="left:880px;top:390px;">14 5</div><div class="a" style="left:458px;top:504px;width:445px;height:17px;background:#d4d0c8"></div><div class="a track" style="left:458px;top:505px;width:445px;height:16px"></div><div class="a rais" style="left:458px;top:505px;width:16px;height:16px"></div><div class="a" style="left:463px;top:509px;width:0;height:0;border-top:4px solid transparent;border-bottom:4px solid transparent;border-right:4px solid #000"></div><div class="a rais" style="left:474px;top:505px;width:371px;height:16px"></div><div class="a rais" style="left:887px;top:505px;width:16px;height:16px"></div><div class="a" style="left:894px;top:509px;width:0;height:0;border-top:4px solid transparent;border-bottom:4px solid transparent;border-left:4px solid #000"></div></div><svg class="a" style="left:462px;top:386px" width="17" height="17" ><defs><linearGradient id="dg" x1="0.3" y1="0" x2="0.6" y2="1"><stop offset="0" stop-color="#7070f0"/><stop offset="0.35" stop-color="#a0a8f0"/><stop offset="0.5" stop-color="#fff8f0"/><stop offset="0.7" stop-color="#c8a878"/><stop offset="1" stop-color="#b07860"/></linearGradient></defs><circle cx="8.5" cy="8.5" r="7.3" fill="url(#dg)" stroke="#101010" stroke-width="1.3"/><circle cx="8.5" cy="8.8" r="1.5" fill="#fff"/></svg><svg class="a" style="left:525px;top:357px" width="10" height="10"><path d="M1 8.5 L4.5 1.5" stroke="#808080" stroke-width="1.2"/><path d="M4.5 1.5 L8 8.5 H1" fill="none" stroke="#fff" stroke-width="1.2"/></svg>
<!-- queue -->
<div class="a w sunk" style="left:4px;top:527px;width:901px;height:109px"></div>
<div class="a hdr" style="left:6px;top:528px;width:181px;height:17px"></div><div class="t" style="left:11px;top:531px;">Сервер/локальный файл</div><div class="a hdr" style="left:187px;top:528px;width:58px;height:17px"></div><div class="t" style="left:192px;top:531px;">Напра...</div><div class="a hdr" style="left:245px;top:528px;width:180px;height:17px"></div><div class="t" style="left:250px;top:531px;">Файл на сервере</div><div class="a hdr" style="left:425px;top:528px;width:80px;height:17px"></div><div class="t" style="left:425px;top:531px;width:74px;text-align:right">Размер</div><div class="a hdr" style="left:505px;top:528px;width:60px;height:17px"></div><div class="t" style="left:510px;top:531px;">Приор...</div><div class="a hdr" style="left:565px;top:528px;width:338px;height:17px"></div><div class="t" style="left:28px;top:548px;">support@ftp.hnt</div><div class="t" style="left:33px;top:565px;">D:\DISTRIB\Driver &amp; DOC &amp; ...</div><div class="t" style="left:203px;top:565px;letter-spacing:1px">--&gt;&gt;</div><div class="t" style="left:251px;top:565px;">/Addpack/DI-604/config.bin</div><div class="t" style="left:425px;top:565px;width:74px;text-align:right">20 038</div><div class="t" style="left:511px;top:565px;">Норма...</div><svg class="a" style="left:9px;top:546px" width="20" height="18" shape-rendering="crispEdges"><rect x="5.5" y="0.5" width="9" height="10" rx="1" fill="#c8ccc8" stroke="#303030"/><rect x="12" y="1" width="2" height="9" fill="#707870"/><rect x="6" y="1" width="6" height="1" fill="#f0f4f0"/><rect x="7" y="3" width="4" height="1" fill="#909890"/><rect x="8" y="5" width="3" height="2" fill="#20a040"/><rect x="8" y="7" width="3" height="2" fill="#c02020"/><rect x="1" y="13" width="16" height="1" fill="#000"/><rect x="9" y="11" width="2" height="2" fill="#000"/><rect x="8" y="13" width="4" height="2" fill="#c8a838"/></svg><svg class="a" style="left:12px;top:562px" width="13" height="17" shape-rendering="crispEdges"><path d="M0.5 0.5 H8.5 L11.5 3.5 V15.5 H0.5z" fill="#fff" stroke="#000"/><path d="M8.5 0.5 V3.5 H11.5" fill="none" stroke="#000"/><rect x="2" y="3" width="4" height="2" fill="#000"/><rect x="2" y="6" width="7" height="1" fill="#000"/><rect x="2" y="8" width="8" height="2" fill="#202020"/><rect x="2" y="11" width="6" height="1" fill="#000"/><rect x="2" y="13" width="8" height="1" fill="#000"/></svg>
<!-- tabs -->
<div class="a" style="left:4px;top:636px;width:901px;height:24px;background:linear-gradient(#d6d3cb,#f4f3ee)"></div><div class="a" style="left:9px;top:638px;width:95px;height:19px;border:1px solid #a0a0a0;border-top:none;border-radius:0 0 3px 3px;background:linear-gradient(#e8e6e0,#d4d1c9)"></div><div class="t" style="left:17px;top:640px;">Задание</div><div class="a" style="left:105px;top:638px;width:156px;height:19px;border:1px solid #a0a0a0;border-top:none;border-radius:0 0 3px 3px;background:linear-gradient(#e8e6e0,#d4d1c9)"></div><div class="t" style="left:111px;top:640px;">Неудавшиеся передачи</div><div class="a" style="left:261px;top:636px;width:157px;height:21px;border:1px solid #a0a0a0;border-top:none;border-radius:0 0 3px 3px;background:linear-gradient(#fff,#f0efea)"></div><div class="t" style="left:267px;top:640px;font-weight:bold;letter-spacing:0.65px">Успешные передачи (1)</div>
<!-- status -->
<div class="a" style="left:313px;top:662px;width:91px;height:18px;box-shadow:inset 1px 1px 0 #808080,inset -1px -1px 0 #fff"></div><div class="a" style="left:405px;top:662px;width:152px;height:18px;box-shadow:inset 1px 1px 0 #808080,inset -1px -1px 0 #fff"></div><div class="a" style="left:558px;top:662px;width:151px;height:18px;box-shadow:inset 1px 1px 0 #808080,inset -1px -1px 0 #fff"></div><div class="a" style="left:710px;top:662px;width:154px;height:18px;box-shadow:inset 1px 1px 0 #808080,inset -1px -1px 0 #fff"></div><div class="t" style="left:713px;top:664px;">Задание: 0 байт</div><svg class="a" style="left:866px;top:662px" width="40" height="20"><defs><radialGradient id="gg" cx="0.4" cy="0.35" r="0.65"><stop offset="0" stop-color="#60b060"/><stop offset="0.45" stop-color="#106a10"/><stop offset="1" stop-color="#002800"/></radialGradient><radialGradient id="rg" cx="0.4" cy="0.35" r="0.65"><stop offset="0" stop-color="#d08080"/><stop offset="0.45" stop-color="#801818"/><stop offset="1" stop-color="#380000"/></radialGradient></defs><circle cx="7" cy="7.5" r="4.3" fill="url(#gg)"/><circle cx="21.3" cy="7.5" r="4.3" fill="url(#rg)"/><g shape-rendering="crispEdges" transform="translate(-1,-1)"><rect x="38" y="7" width="1" height="1" fill="#fff"/><rect x="38" y="8" width="1" height="2" fill="#808080"/><rect x="37" y="8" width="1" height="1" fill="#fff"/><rect x="37" y="9" width="1" height="2" fill="#808080"/><rect x="36" y="9" width="1" height="1" fill="#fff"/><rect x="36" y="10" width="1" height="2" fill="#808080"/><rect x="35" y="10" width="1" height="1" fill="#fff"/><rect x="35" y="11" width="1" height="2" fill="#808080"/><rect x="34" y="11" width="1" height="1" fill="#fff"/><rect x="34" y="12" width="1" height="2" fill="#808080"/><rect x="33" y="12" width="1" height="1" fill="#fff"/><rect x="33" y="13" width="1" height="2" fill="#808080"/><rect x="32" y="13" width="1" height="1" fill="#fff"/><rect x="32" y="14" width="1" height="2" fill="#808080"/><rect x="31" y="14" width="1" height="1" fill="#fff"/><rect x="31" y="15" width="1" height="2" fill="#808080"/><rect x="30" y="15" width="1" height="1" fill="#fff"/><rect x="30" y="16" width="1" height="2" fill="#808080"/><rect x="29" y="16" width="1" height="1" fill="#fff"/><rect x="29" y="17" width="1" height="2" fill="#808080"/><rect x="38" y="11" width="1" height="1" fill="#fff"/><rect x="38" y="12" width="1" height="2" fill="#808080"/><rect x="37" y="12" width="1" height="1" fill="#fff"/><rect x="37" y="13" width="1" height="2" fill="#808080"/><rect x="36" y="13" width="1" height="1" fill="#fff"/><rect x="36" y="14" width="1" height="2" fill="#808080"/><rect x="35" y="14" width="1" height="1" fill="#fff"/><rect x="35" y="15" width="1" height="2" fill="#808080"/><rect x="34" y="15" width="1" height="1" fill="#fff"/><rect x="34" y="16" width="1" height="2" fill="#808080"/><rect x="33" y="16" width="1" height="1" fill="#fff"/><rect x="33" y="17" width="1" height="2" fill="#808080"/><rect x="38" y="15" width="1" height="1" fill="#fff"/><rect x="38" y="16" width="1" height="2" fill="#808080"/><rect x="37" y="16" width="1" height="1" fill="#fff"/><rect x="37" y="17" width="1" height="2" fill="#808080"/></g></svg>
</body></html>
